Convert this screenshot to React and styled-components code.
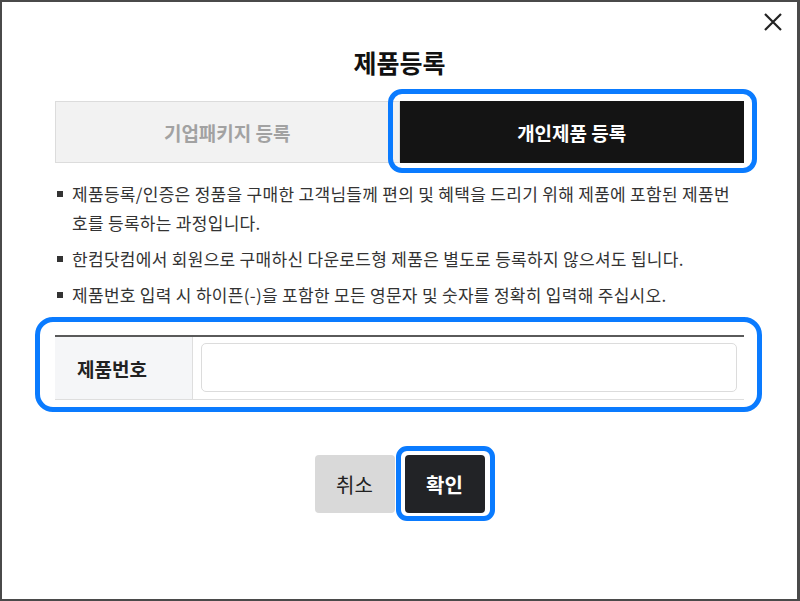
import React from 'react'
import styled, { createGlobalStyle, css } from 'styled-components'

const BLUE = '#0a7bff'

const GlobalStyle = createGlobalStyle`
  html, body {
    margin: 0;
    padding: 0;
    background: #fff;
  }
  body {
    font-family: 'Noto Sans CJK KR', 'Noto Sans', sans-serif;
    color: #222;
  }
  * { box-sizing: border-box; }
`

// blue annotation ring drawn over a part
const ring = css`
  position: relative;
  &::after {
    content: '';
    position: absolute;
    inset: ${(p) => p.$ring};
    border: 5px solid ${BLUE};
    border-radius: ${(p) => p.$radius || '14px'};
    pointer-events: none;
  }
`

const Modal = styled.div`
  position: relative;
  width: 800px;
  height: 601px;
  border: 2px solid #4a4a4a;
  border-right-width: 3px;
  background: #fff;
  padding: 43px 53px 0;
`
const Close = styled.button`
  position: absolute;
  top: 8px;
  right: 12px;
  width: 24px;
  height: 24px;
  padding: 0;
  border: 0;
  background: none;
  cursor: pointer;
`
const Title = styled.h2`
  margin: 0;
  font-size: 25px;
  line-height: 34px;
  font-weight: 700;
  text-align: center;
  color: #111;
`
const Tabs = styled.div`
  display: grid;
  grid-template-columns: 1fr 1fr;
  margin-top: 22px;
  height: 62px;
`
const Tab = styled.div`
  display: flex;
  align-items: center;
  justify-content: center;
  font-size: 19px;
  font-weight: 700;
  ${(p) =>
    p.$active
      ? css`
          background: #141414;
          color: #fff;
          ${ring}
        `
      : css`
          background: #f2f2f2;
          border: 1px solid #dcdcdc;
          color: #a2a2a2;
        `}
`
const Notes = styled.ul`
  list-style: none;
  margin: 16px 0 0;
  padding: 0 0 0 17px;
`
const Note = styled.li`
  position: relative;
  font-size: 17px;
  line-height: 29px;
  color: #333;
  word-break: break-all;
  letter-spacing: 0.3px;
  & + & {
    margin-top: 7px;
  }
  &::before {
    content: '';
    position: absolute;
    left: -15px;
    top: 12px;
    width: 6px;
    height: 6px;
    background: #333;
  }
`
const Table = styled.div`
  margin-top: 26px;
  border-top: 2px solid #5a5a5a;
  border-bottom: 1px solid #dedede;
  display: grid;
  grid-template-columns: 138px 1fr;
  ${ring}
`
const Label = styled.div`
  display: flex;
  align-items: center;
  padding-left: 22px;
  background: #f5f6f8;
  border-right: 1px solid #dedede;
  font-size: 19px;
  font-weight: 700;
  color: #222;
`
const Field = styled.div`
  padding: 6px 7px 7px 8px;
`
const Input = styled.input`
  display: block;
  width: 100%;
  height: 49px;
  border: 1px solid #dcdcdc;
  border-radius: 5px;
  background: #fff;
  outline: none;
  font: inherit;
  padding: 0 12px;
`
const Actions = styled.div`
  display: flex;
  justify-content: center;
  gap: 10px;
  margin-top: 55px;
`
const Button = styled.button`
  width: 80px;
  height: 58px;
  border: 0;
  border-radius: 4px;
  font-family: inherit;
  font-size: 20px;
  cursor: pointer;
  ${(p) =>
    p.$primary
      ? css`
          background: #222326;
          color: #fff;
          font-weight: 700;
          ${ring}
        `
      : css`
          background: #d9d9d9;
          color: #222;
          font-weight: 400;
        `}
`

export default () => (
  <>
    <GlobalStyle />
    <Modal>
      <Close aria-label="닫기">
        <svg width="24" height="24" viewBox="0 0 24 24">
          <path d="M4 4 L20 20 M20 4 L4 20" stroke="#222" strokeWidth="2.2" />
        </svg>
      </Close>
      <Title>제품등록</Title>
      <Tabs>
        <Tab>기업패키지 등록</Tab>
        <Tab $active $ring="-12px -13px -10px -12px">개인제품 등록</Tab>
      </Tabs>
      <Notes>
        <Note>
          제품등록/인증은 정품을 구매한 고객님들께 편의 및 혜택을 드리기 위해 제품에 포함된 제품번호를 등록하는 과정입니다.
        </Note>
        <Note>한컴닷컴에서 회원으로 구매하신 다운로드형 제품은 별도로 등록하지 않으셔도 됩니다.</Note>
        <Note>제품번호 입력 시 하이픈(-)을 포함한 모든 영문자 및 숫자를 정확히 입력해 주십시오.</Note>
      </Notes>
      <Table $ring="-20px -18px -13px -20px" $radius="18px">
        <Label>제품번호</Label>
        <Field>
          <Input type="text" />
        </Field>
      </Table>
      <Actions>
        <Button>취소</Button>
        <Button $primary $ring="-9px -10px -8px -9px" $radius="11px">
          확인
        </Button>
      </Actions>
    </Modal>
  </>
)
